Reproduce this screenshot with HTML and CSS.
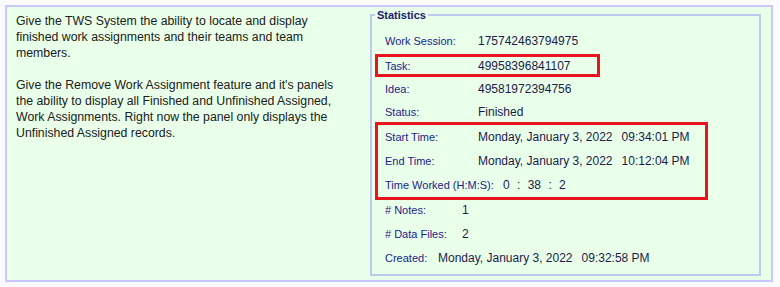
FILE: index.html
```html
<!DOCTYPE html>
<html lang="en">

<head>
    <meta charset="UTF-8">
    <meta name="viewport" content="width=device-width, initial-scale=1.0">
    <title>Work Assignment</title>
    <link rel="stylesheet" href="styles.css">
</head>

<body>

    <div class="panel">
        <div class="description">
            <p>Give the TWS System the ability to locate and display finished work assignments and their teams and team members.</p>
            <p>Give the Remove Work Assignment feature and it's panels the ability to display all Finished and Unfinished Assigned, Work Assignments. Right now the panel only displays the Unfinished Assigned records.</p>
        </div>

        <fieldset class="stats">
            <legend>Statistics</legend>

            <div class="row">
                <span class="label w-main">Work Session:</span>
                <span class="value">175742463794975</span>
            </div>

            <div class="highlight task-box">
                <div class="row row-task">
                    <span class="label w-main">Task:</span>
                    <span class="value">49958396841107</span>
                </div>
            </div>

            <div class="row">
                <span class="label w-main">Idea:</span>
                <span class="value">49581972394756</span>
            </div>
            <div class="row row-status">
                <span class="label w-main">Status:</span>
                <span class="value">Finished</span>
            </div>

            <div class="highlight time-box">
                <div class="row">
                    <span class="label w-main">Start Time:</span>
                    <span class="value">Monday, January 3, 2022<span class="time">09:34:01 PM</span></span>
                </div>
                <div class="row">
                    <span class="label w-main">End Time:</span>
                    <span class="value">Monday, January 3, 2022<span class="time">10:12:04 PM</span></span>
                </div>
                <div class="row">
                    <span class="label w-worked">Time Worked (H:M:S):</span>
                    <span class="value hms">0 <span>:</span> 38 <span>:</span> 2</span>
                </div>
            </div>

            <div class="row">
                <span class="label w-notes"># Notes:</span>
                <span class="value">1</span>
            </div>
            <div class="row">
                <span class="label w-notes"># Data Files:</span>
                <span class="value">2</span>
            </div>
            <div class="row">
                <span class="label w-created">Created:</span>
                <span class="value">Monday, January 3, 2022<span class="time">09:32:58 PM</span></span>
            </div>
        </fieldset>
    </div>

</body>

</html>
```

FILE: styles.css
```css
/* Global Styles */
body {
    font-family: 'Liberation Sans', Arial, sans-serif;
    background-color: #fafaff;
    margin: 0;
    padding: 5px;
}

.panel {
    display: flex;
    height: 273px;
    width: 764px;
    background-color: #eaffea;
    border: 2px solid #c8c8ff;
}

/* Left description */
.description {
    width: 325px;
    flex-shrink: 0;
    padding: 6px 29px 0 9px;
    font-size: 12.3px;
    line-height: 16px;
    color: #202020;
}

.description p {
    margin: 0 0 16px 0;
}

/* Statistics box */
.stats {
    width: 391px;
    margin: 2px 0 0 0;
    height: 267px;
    padding: 8px 0 0 13px;
    border: 2px solid #bccaf0;
    box-sizing: border-box;
}

.stats legend {
    font-size: 11px;
    font-weight: bold;
    color: #1a1a6e;
    padding: 0 2px;
    margin-left: -10px;
}

.row {
    display: flex;
    align-items: center;
    height: 24px;
}

.row-task {
    height: 17px;
}

.row-status {
    height: 21px;
}

.label {
    font-size: 11px;
    color: #22228a;
    flex-shrink: 0;
}

.w-main {
    width: 93px;
}

.w-worked {
    width: 118px;
}

.w-notes {
    width: 77px;
}

.w-created {
    width: 53px;
}

.value {
    font-size: 12px;
    color: #1c1c4c;
    white-space: nowrap;
}

.time {
    margin-left: 9px;
}

.hms span {
    margin: 0 4px;
}

/* Red highlight boxes */
.highlight {
    border: 3px solid #e8141e;
    margin-left: -10px;
    padding-left: 7px;
}

.task-box {
    width: 212px;
    margin-top: 1px;
}

.time-box {
    width: 320px;
    margin-bottom: -2px;
}
```
